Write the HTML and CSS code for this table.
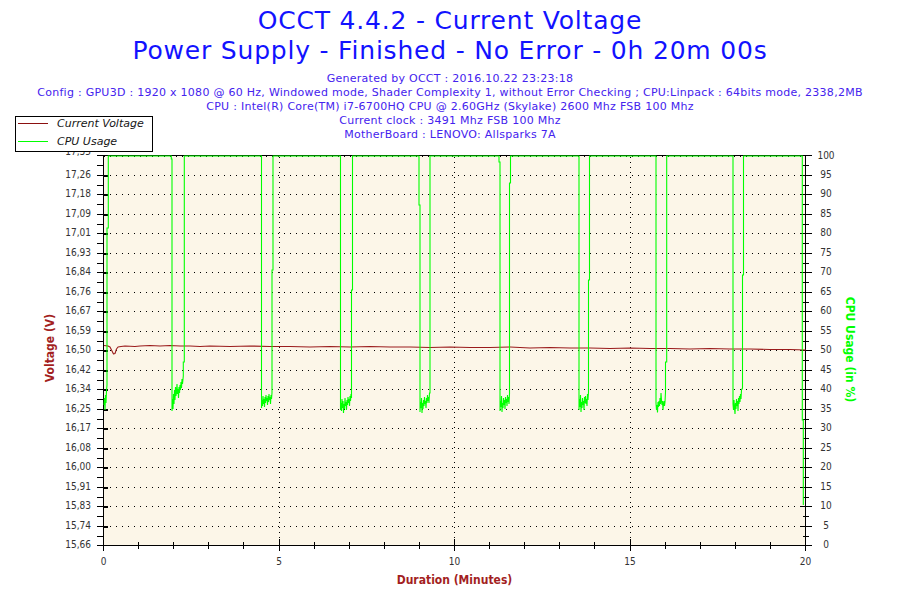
FILE: index.html
```html
<!DOCTYPE html>
<html>
<head>
<meta charset="utf-8">
<title>OCCT 4.4.2 - Current Voltage</title>
<link rel="stylesheet" href="styles.css">
</head>
<body>
<div class="report">
  <header class="head">
    <h1 class="title"><span>OCCT 4.4.2 - Current Voltage</span><span>Power Supply - Finished - No Error - 0h 20m 00s</span></h1>
    <div class="info">
      <p>Generated by OCCT : 2016.10.22 23:23:18</p>
      <p>Config : GPU3D : 1920 x 1080 @ 60 Hz, Windowed mode, Shader Complexity 1, without Error Checking ; CPU:Linpack : 64bits mode, 2338,2MB</p>
      <p>CPU : Intel(R) Core(TM) i7-6700HQ CPU @ 2.60GHz (Skylake) 2600 Mhz FSB 100 Mhz</p>
      <p>Current clock : 3491 Mhz FSB 100 Mhz</p>
      <p>MotherBoard : LENOVO: Allsparks 7A</p>
    </div>
    <div class="legend">
      <div class="legend-row"><span class="swatch swatch-volt"></span><span class="legend-text">Current Voltage</span></div>
      <div class="legend-row"><span class="swatch swatch-cpu"></span><span class="legend-text">CPU Usage</span></div>
    </div>
  </header>
  <svg class="chart" width="900" height="460" viewBox="0 140 900 460" xmlns="http://www.w3.org/2000/svg">
    <rect class="plot-bg" x="103.5" y="155.5" width="702" height="390"/>
    <path class="grid-h" d="M104 156.5H805M104 175.5H805M104 194.5H805M104 214.5H805M104 233.5H805M104 253.5H805M104 272.5H805M104 292.5H805M104 311.5H805M104 331.5H805M104 350.5H805M104 370.5H805M104 389.5H805M104 409.5H805M104 428.5H805M104 448.5H805M104 467.5H805M104 487.5H805M104 506.5H805M104 526.5H805"/>
    <path class="grid-v" d="M279.5 157V545M454.5 157V545M630.5 157V545"/>
    <path class="frame" d="M103.5 155.5H805.5V545.5M103.5 155.5V545.5H805.5"/>
    <path class="tick" d="M97 155.5H103.5M97 175.5H103.5M97 194.5H103.5M97 214.5H103.5M97 233.5H103.5M97 253.5H103.5M97 272.5H103.5M97 292.5H103.5M97 311.5H103.5M97 331.5H103.5M97 350.5H103.5M97 370.5H103.5M97 389.5H103.5M97 409.5H103.5M97 428.5H103.5M97 448.5H103.5M97 467.5H103.5M97 487.5H103.5M97 506.5H103.5M97 526.5H103.5M97 545.5H103.5
      M97 165.5H103.5M97 185.5H103.5M97 204.5H103.5M97 224.5H103.5M97 243.5H103.5M97 263.5H103.5M97 282.5H103.5M97 302.5H103.5M97 321.5H103.5M97 341.5H103.5M97 360.5H103.5M97 380.5H103.5M97 399.5H103.5M97 419.5H103.5M97 438.5H103.5M97 458.5H103.5M97 477.5H103.5M97 497.5H103.5M97 516.5H103.5M97 536.5H103.5
      M800 155.5H812M800 175.5H812M800 194.5H812M800 214.5H812M800 233.5H812M800 253.5H812M800 272.5H812M800 292.5H812M800 311.5H812M800 331.5H812M800 350.5H812M800 370.5H812M800 389.5H812M800 409.5H812M800 428.5H812M800 448.5H812M800 467.5H812M800 487.5H812M800 506.5H812M800 526.5H812M800 545.5H812
      M803 165.5H809M803 185.5H809M803 204.5H809M803 224.5H809M803 243.5H809M803 263.5H809M803 282.5H809M803 302.5H809M803 321.5H809M803 341.5H809M803 360.5H809M803 380.5H809M803 399.5H809M803 419.5H809M803 438.5H809M803 458.5H809M803 477.5H809M803 497.5H809M803 516.5H809M803 536.5H809
      M103.5 539V551M279.5 539V551M454.5 539V551M630.5 539V551M805.5 539V551
      M138.5 542V549M173.5 542V549M208.5 542V549M243.5 542V549M314.5 542V549M349.5 542V549M384.5 542V549M419.5 542V549M489.5 542V549M524.5 542V549M559.5 542V549M594.5 542V549M665.5 542V549M700.5 542V549M735.5 542V549M770.5 542V549"/>
    <path class="tick-bold" d="M103.5 175.5H108M103.5 194.5H108M103.5 214.5H108M103.5 233.5H108M103.5 253.5H108M103.5 272.5H108M103.5 292.5H108M103.5 311.5H108M103.5 331.5H108M103.5 350.5H108M103.5 370.5H108M103.5 389.5H108M103.5 409.5H108M103.5 428.5H108M103.5 448.5H108M103.5 467.5H108M103.5 487.5H108M103.5 506.5H108M103.5 526.5H108"/>
    <polyline class="line-volt" points="104,345.5 108,346 110,347 112,351 113.5,354 115,353.5 116.5,349 118,347 121,346.5 125,346 135,346.5 140,346 150,345.5 160,346 170,345.5 180,346 190,346 200,346.5 210,346 230,346.5 250,346 270,346.5 290,346.5 310,347 330,346.5 350,347 370,346.5 390,347 410,347 430,347.5 450,347 470,347.5 490,347.5 510,347 530,348 550,347.5 570,348 590,348 610,348.5 630,348 650,348.5 670,348.5 690,349 710,348.5 730,349 750,349 770,349.5 790,349.5 806,350"/>
    <polyline class="line-cpu" points="104,405 104.5,398 105,410 105.5,395 106,403 106.5,391 107,385 107,228 108.3,228 108.3,156
      171.3,156 171.3,159 172,159 172,411 172.5,399 173,409 173.5,394 174,404 174.5,390 175,400 175.5,387 176,396 176.5,392 177,384 177.5,394 178,389 178.5,398 179,387 179.5,393 180,385 180.5,390 181,382 181.5,388 182,379 182.5,384 183.3,376 183.3,362 184.3,362 184.3,156
      261.5,156 261.5,408 262,400 262.5,406 263,396 263.5,404 264,399 264.5,407 265,397 265.5,403 266,395 266.5,401 267,398 267.5,405 268,396 268.5,402 269,394 269.5,400 270,397 270.5,404 271,395 271.5,399 272,393 272,270 273,270 273,156
      340.5,156 340.5,410 341,403 341.5,411 342,399 342.5,408 343,401 343.5,413 344,404 344.5,409 345,398 345.5,406 346,402 346.5,410 347,400 347.5,405 348,397 348.5,403 349,399 349.5,406 350,396 350.5,401 351,394 351.5,398 351.5,290 352.5,290 352.5,156
      419,156 419,205 420,205 420,412 420.5,402 421,408 421.5,398 422,413 422.5,403 423,409 423.5,400 424,406 424.5,397 425,404 425.5,401 426,408 426.5,398 427,403 427.5,395 428,401 428.5,397 429,403 429.5,393 430,393 430,156
      499,156 499,162 500,162 500,411 500.5,401 501,407 501.5,396 502,412 502.5,403 503,408 503.5,398 504,405 504.5,400 505,409 505.5,397 506,403 506.5,399 507,406 507.5,395 508,402 508.5,397 509,404 509.5,394 509.5,183 510.5,183 510.5,156
      579,156 579,410 579.5,399 580,407 580.5,395 581,412 581.5,402 582,408 582.5,398 583,405 583.5,401 584,410 584.5,397 585,403 585.5,396 586,404 586.5,399 587,406 587.5,394 588,400 588.5,392 588.5,280 589.5,280 589.5,156
      656,156 656,403 656.5,410 657,405 657.5,412.5 658,402 658.5,407 659,401 659.5,406 660,398 660.5,404 661,393 661.5,400 662,405 662.5,401 663,410 663.5,404 664,401 664.5,406 665,402 665.5,392 665.5,362 666.7,362 666.7,156
      733,156 733,404 733.5,410 734,400 734.5,408 735,414 735.5,403 736,409 736.5,399 737,406 737.5,401 738,411 738.5,398 739,404 739.5,396 740,402 740.5,394 741,399 741.5,390 742.5,388 742.5,275 743.5,275 743.5,156
      802.3,156 802.3,420 803.3,420 803.3,505"/>
    <g class="tick-label tick-label-left">
      <text x="91" y="151">17,35</text><text x="91" y="174.5">17,26</text><text x="91" y="193.5">17,18</text><text x="91" y="213.5">17,09</text><text x="91" y="232.5">17,01</text><text x="91" y="252.5">16,93</text><text x="91" y="271.5">16,84</text><text x="91" y="291.5">16,76</text><text x="91" y="310.5">16,67</text><text x="91" y="330.5">16,59</text><text x="91" y="349.5">16,50</text><text x="91" y="369.5">16,42</text><text x="91" y="388.5">16,34</text><text x="91" y="408.5">16,25</text><text x="91" y="427.5">16,17</text><text x="91" y="447.5">16,08</text><text x="91" y="466.5">16,00</text><text x="91" y="486.5">15,91</text><text x="91" y="505.5">15,83</text><text x="91" y="525.5">15,74</text><text x="91" y="544.5">15,66</text>
    </g>
    <g class="tick-label tick-label-right">
      <text x="826" y="155">100</text><text x="826" y="174.5">95</text><text x="826" y="193.5">90</text><text x="826" y="213.5">85</text><text x="826" y="232.5">80</text><text x="826" y="252.5">75</text><text x="826" y="271.5">70</text><text x="826" y="291.5">65</text><text x="826" y="310.5">60</text><text x="826" y="330.5">55</text><text x="826" y="349.5">50</text><text x="826" y="369.5">45</text><text x="826" y="388.5">40</text><text x="826" y="408.5">35</text><text x="826" y="427.5">30</text><text x="826" y="447.5">25</text><text x="826" y="466.5">20</text><text x="826" y="486.5">15</text><text x="826" y="505.5">10</text><text x="826" y="525.5">5</text><text x="826" y="544.5">0</text>
    </g>
    <g class="tick-label tick-label-bottom">
      <text x="103.5" y="561">0</text><text x="279" y="561">5</text><text x="454.5" y="561">10</text><text x="630" y="561">15</text><text x="805.5" y="561">20</text>
    </g>
    <text class="axis-title axis-title-volt" x="50" y="348" transform="rotate(-90 50 348)">Voltage (V)</text>
    <text class="axis-title axis-title-cpu" x="850" y="349.5" transform="rotate(90 850 349.5)">CPU Usage (in %)</text>
    <text class="axis-title axis-title-dur" x="454.5" y="579.5">Duration (Minutes)</text>
  </svg>
</div>
</body>
</html>
```
FILE: styles.css
```css
html, body {
  margin: 0;
  padding: 0;
  background: #ffffff;
}
body {
  width: 900px;
  height: 600px;
  overflow: hidden;
  font-family: "DejaVu Sans", sans-serif;
}
.report {
  position: relative;
  width: 900px;
  height: 600px;
}
.head {
  height: 140px;
  box-sizing: border-box;
  padding-top: 6px;
  display: flex;
  flex-direction: column;
  align-items: center;
}
.title {
  margin: 0;
  font-family: "DejaVu Sans", sans-serif;
  font-weight: normal;
  font-size: 25px;
  letter-spacing: 0.8px;
  line-height: 30px;
  color: #1212ff;
  text-align: center;
  white-space: nowrap;
}
.title span {
  display: block;
}
.info {
  margin-top: 5.5px;
  font-family: "DejaVu Sans", sans-serif;
  font-size: 11px;
  letter-spacing: 0.27px;
  line-height: 14px;
  color: #4422ee;
  text-align: center;
}
.info p {
  margin: 0;
  white-space: nowrap;
}
.legend {
  position: absolute;
  left: 15px;
  top: 116px;
  width: 138px;
  height: 36px;
  box-sizing: border-box;
  border: 1px solid #000;
  background: #fff;
  display: flex;
  flex-direction: column;
}
.legend-row {
  height: 18px;
  flex: none;
  display: flex;
  align-items: center;
  position: relative;
}
.legend-row:first-child {
  margin-top: -3px;
}
.swatch {
  width: 30px;
  height: 1px;
  margin-left: 2px;
  margin-right: 9px;
  align-self: flex-start;
  margin-top: 9px;
}
.swatch-volt { background: #8b1010; }
.swatch-cpu { background: #00ff00; }
.legend-text {
  font-family: "DejaVu Sans", sans-serif;
  font-style: italic;
  font-size: 11px;
  color: #151515;
  white-space: nowrap;
}
.chart {
  display: block;
}
.plot-bg {
  fill: #fcf6e8;
}
.grid-h {
  fill: none;
  stroke: #000;
  stroke-width: 1;
  stroke-dasharray: 1 5;
  shape-rendering: crispEdges;
}
.grid-v {
  fill: none;
  stroke: #000;
  stroke-width: 1;
  stroke-dasharray: 1 4;
  shape-rendering: crispEdges;
}
.frame, .tick {
  fill: none;
  stroke: #000;
  stroke-width: 1;
  shape-rendering: crispEdges;
}
.tick-bold {
  fill: none;
  stroke: #000;
  stroke-width: 2;
  shape-rendering: crispEdges;
}
.line-volt {
  fill: none;
  stroke: #9a1b1b;
  stroke-width: 1.1;
  stroke-linejoin: round;
}
.line-cpu {
  fill: none;
  stroke: #00ff00;
  stroke-width: 1.1;
  stroke-linejoin: miter;
}
.tick-label {
  font-family: "DejaVu Sans Condensed", "DejaVu Sans", sans-serif;
  font-size: 10px;
  fill: #333;
  dominant-baseline: central;
}
.tick-label-left { text-anchor: end; }
.tick-label-right { text-anchor: middle; }
.tick-label-bottom { text-anchor: middle; }
.axis-title {
  font-family: "DejaVu Sans Condensed", "DejaVu Sans", sans-serif;
  font-size: 12px;
  font-weight: bold;
  text-anchor: middle;
  dominant-baseline: central;
}
.axis-title-volt, .axis-title-dur { fill: #a31f1f; }
.axis-title-cpu { fill: #00ff00; }
```
